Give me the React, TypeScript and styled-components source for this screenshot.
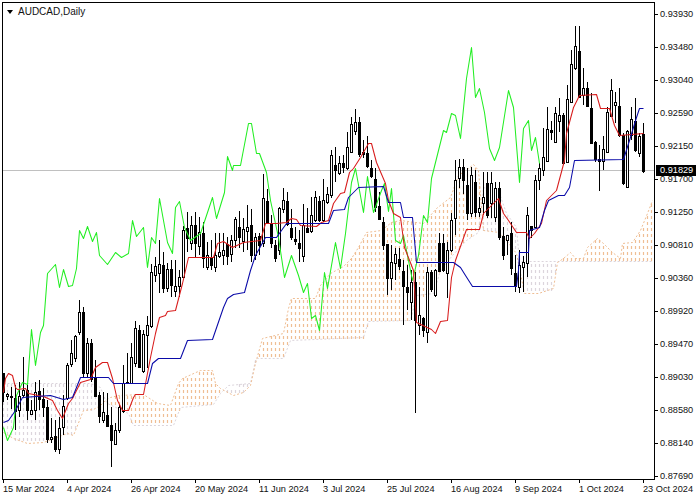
import React from 'react';
import styled, { createGlobalStyle } from 'styled-components';

type Candle = [number, number, number, number, number];
type Pt = [number, number];

// high, body top, body bottom, low, bullish (1 = hollow)
const candles: Candle[] = [
  [373,373,392,402,0],[393,394,396,400,1],[387,396,397,409,1],[385,398,411,430,0],[382,396,410,417,1],[357,390,395,397,1],
  [385,390,410,420,0],[400,410,414,415,1],[382,392,410,420,1],[380,391,399,410,0],[388,399,407,417,0],[400,407,439,443,0],
  [418,437,439,443,1],[420,436,449,452,0],[417,428,449,454,1],[395,406,427,435,1],[363,365,398,400,1],[340,353,364,367,1],
  [335,336,358,362,1],[300,312,332,335,1],[307,312,373,378,0],[338,343,373,377,1],[339,343,379,382,0],[360,377,396,396,0],
  [392,395,416,423,0],[392,412,420,423,1],[393,415,426,426,0],[407,425,440,467,0],[423,430,444,445,1],[404,407,430,433,1],
  [365,383,411,413,1],[353,382,383,384,1],[343,357,383,384,1],[321,328,363,367,1],[325,330,367,367,0],[330,334,371,373,1],
  [316,325,335,368,1],[264,272,326,328,1],[257,266,275,282,1],[240,264,273,293,1],[252,265,288,293,0],[263,269,288,292,1],
  [260,269,285,297,0],[260,286,291,297,1],[270,277,286,297,1],[226,230,277,278,1],[212,228,238,252,0],[216,225,243,250,1],
  [212,225,243,258,0],[217,232,246,255,1],[222,233,258,268,0],[242,255,267,270,1],[240,258,265,270,0],[233,255,267,272,1],
  [233,252,256,258,1],[233,250,255,265,1],[237,244,256,265,0],[235,240,254,262,1],[217,219,240,248,1],[211,227,237,248,0],
  [218,229,241,252,1],[205,227,231,250,1],[209,225,255,262,0],[233,237,255,260,1],[233,236,245,255,0],[174,198,243,247,1],
  [189,201,222,223,0],[215,223,243,248,0],[240,245,258,262,0],[207,208,250,255,1],[188,200,209,213,1],[192,201,224,226,0],
  [209,228,237,240,0],[227,239,241,245,0],[230,243,248,262,0],[204,225,256,262,1],[208,228,232,233,0],[197,215,231,233,1],
  [191,197,220,222,1],[196,201,220,222,0],[179,200,220,222,1],[187,194,202,204,1],[150,155,195,198,1],[147,165,170,182,0],
  [156,163,173,175,1],[155,163,167,173,0],[132,147,168,170,1],[117,124,152,153,1],[109,122,131,135,1],[117,122,154,157,0],
  [140,152,154,158,0],[136,153,166,168,0],[160,168,176,178,0],[168,179,207,212,0],[192,206,219,220,0],[217,222,245,250,0],
  [245,244,278,295,0],[245,262,278,290,1],[248,254,263,280,1],[248,259,266,270,0],[260,271,286,325,0],[265,287,292,310,0],
  [270,282,302,320,1],[272,282,320,413,0],[287,315,325,335,1],[317,318,330,337,0],[267,272,332,343,1],[270,272,289,292,0],
  [269,270,295,297,1],[233,243,271,272,0],[234,243,270,272,0],[242,250,273,298,1],[213,220,250,252,1],[160,180,218,235,1],
  [159,167,178,188,1],[159,167,180,194,0],[168,185,213,220,0],[167,175,213,217,1],[170,182,212,217,0],[197,208,212,217,1],
  [172,197,203,215,1],[172,183,215,218,0],[172,183,203,218,1],[182,188,217,222,1],[182,188,237,240,0],[227,236,255,260,0],
  [235,235,240,255,1],[222,233,268,275,0],[255,273,286,292,0],[250,265,287,293,1],[256,262,267,292,1],[207,215,263,277,1],
  [226,226,230,238,0],[175,180,227,228,1],[163,168,180,190,1],[128,157,170,176,1],[107,129,161,162,1],[121,130,132,140,0],
  [107,113,142,143,1],[98,115,121,132,1],[113,115,163,165,0],[85,99,162,163,1],[50,64,102,103,1],[26,46,68,70,1],
  [26,51,97,98,0],[68,88,95,105,1],[82,88,106,107,0],[93,108,143,144,0],[141,142,159,162,0],[145,159,161,191,0],
  [136,149,161,170,1],[107,112,152,153,1],[79,90,116,117,1],[92,102,105,123,1],[88,106,135,137,0],[133,135,183,185,0],
  [130,131,187,187,1],[107,119,135,140,1],[98,121,150,152,0],[133,136,153,157,1],[123,134,171,173,0],
];

const chikou: Pt[] = [
  [3,427],[7,440],[13,427],[16,395],[22,382],[27,384],[31,329],[35,365],[40,332],[43,325],[47,273],[55,264],[59,287],[63,269],[68,286],[72,285],[76,268],[79,230],[83,238],[87,226],[92,241],[96,232],[99,255],[107,264],[115,252],[121,257],[128,253],[132,220],[136,236],[143,227],[147,267],[151,237],[155,243],[159,198],[167,242],[172,253],[175,207],[179,201],[184,227],[190,240],[200,233],[212,197],[216,218],[224,192],[227,156],[232,170],
  [233,165],[240,165],[248,123],[251,123],[256,153],[259,153],[266,172],[270,200],[278,237],[281,257],[284,277],[291,255],[298,275],[303,292],[307,283],[311,318],[315,315],[319,330],[324,272],[327,288],[335,242],[340,268],[345,233],[351,182],[355,168],[363,212],[367,176],[373,212],[381,190],[384,183],[388,211],[391,188],[395,240],[400,243],[403,235],[406,250],[412,280],[418,255],[423,215],[427,222],[431,178],[443,130],[446,132],[451,113],[455,115],[460,138],[466,78],[471,47],[475,97],[479,88],[484,112],[489,148],[494,160],[499,147],[508,90],[513,107],[519,182],[523,128],[528,120],[531,150],[535,137],[539,163],
];

const tenkan: Pt[] = [
  [3,392],[5,378],[8,373],[12,375],[15,387],[17,389],[25,388],[28,393],[43,396],[52,400],[57,410],[62,418],[68,403],[72,398],[80,382],[90,379],[95,367],[102,362],[107,362],[112,378],[117,400],[122,410],[128,410],[133,397],[135,394],[143,394],[150,357],[155,333],[159,317],[165,315],[167,311],[175,310],[182,283],[188,257],[213,257],[217,243],[223,241],[232,247],[243,242],[260,240],[265,223],[276,223],[286,222],[291,218],[296,219],[300,225],[316,226],[321,222],[328,220],[333,203],[340,193],[344,192],[349,172],[353,168],[360,157],[368,143],[371,143],[376,162],[385,183],[388,200],[393,213],[400,217],[404,247],[413,270],[416,322],[431,329],[435,333],[440,321],[447,320],[451,277],[455,260],[466,229],[479,229],[483,213],[498,198],[503,213],[508,220],[516,232],[526,232],[529,238],[534,233],[541,223],[546,200],[556,190],[564,160],[566,133],[573,107],[579,95],[596,94],[600,108],[609,108],[614,125],[619,135],[643,133],
];

const kijun: Pt[] = [
  [3,422],[8,420],[15,410],[22,397],[50,395],[63,399],[72,397],[80,377],[108,377],[113,383],[147,383],[152,363],[158,358],[180,358],[187,340],[212,339],[223,307],[227,298],[233,294],[244,292],[250,270],[255,255],[265,237],[276,237],[281,230],[286,223],[328,223],[333,210],[344,209],[348,197],[358,187],[383,186],[388,202],[400,202],[403,217],[412,217],[416,262],[453,262],[460,267],[465,275],[472,286],[516,286],[518,270],[519,252],[528,252],[529,230],[539,227],[544,210],[548,200],[558,195],[564,195],[569,187],[574,160],[623,159],[629,140],[636,117],[639,108],[643,108],
];

const senkouA: Pt[] = [
  [3,432],[13,438],[27,443],[43,442],[67,433],[73,435],[83,410],[93,409],[100,405],[105,400],[110,397],[118,395],[143,394],[157,403],[170,405],[178,383],[182,378],[200,370],[212,370],[215,383],[220,388],[233,395],[243,392],[250,385],[255,363],[262,338],[283,333],[288,308],[291,298],[315,298],[320,285],[330,273],[343,266],[351,258],[358,247],[366,232],[381,230],[391,222],[400,220],[423,223],[436,208],[450,197],[458,175],[468,168],[473,164],[478,170],[483,230],[499,232],[506,240],[516,253],[524,293],[538,293],[553,288],[557,262],[563,258],[570,252],[575,258],[583,258],[587,247],[597,238],[603,243],[612,252],[620,258],[622,243],[632,242],[640,230],[647,213],[652,200],
];

const senkouB: Pt[] = [
  [3,383],[90,383],[100,387],[105,400],[107,403],[128,413],[133,425],[173,425],[180,407],[213,404],[220,393],[228,385],[250,383],[255,360],[257,358],[283,358],[290,340],[363,337],[368,321],[410,320],[416,295],[433,293],[440,270],[452,255],[466,240],[478,232],[483,187],[499,193],[506,213],[516,227],[519,261],[652,261],
];

const prices = ['0.93930','0.93480','0.93040','0.92590','0.92150','0.91700','0.91250','0.90810','0.90360','0.89920','0.89470','0.89030','0.88580','0.88140','0.87690'];
const dates = ['15 Mar 2024','4 Apr 2024','26 Apr 2024','20 May 2024','11 Jun 2024','3 Jul 2024','25 Jul 2024','16 Aug 2024','9 Sep 2024','1 Oct 2024','23 Oct 2024'];

const at = (line: Pt[], x: number): number => {
  for (let i = 1; i < line.length; i++) {
    if (x <= line[i][0]) {
      const [x0, y0] = line[i - 1];
      const [x1, y1] = line[i];
      return y0 + ((y1 - y0) * (x - x0)) / (x1 - x0 || 1);
    }
  }
  return line[line.length - 1][1];
};

const SAND = '#efbe94';
const THISTLE = '#dcd5dc';

const cloudPath = (sandy: boolean): string => {
  let d = '';
  for (let x = 3; x <= 651; x += 4) {
    const a = at(senkouA, x);
    const b = at(senkouB, x);
    if ((a < b) !== sandy) continue;
    const top = Math.min(a, b);
    const bottom = Math.max(a, b);
    for (let y = Math.ceil(top / 6) * 6; y < bottom; y += 6) {
      d += `M${x + 0.5} ${y}v3`;
    }
  }
  return d;
};

const toPoints = (line: Pt[]) => line.map(([x, y]) => `${x + 0.5},${y + 0.5}`).join(' ');

const GlobalStyle = createGlobalStyle`
  html, body { margin: 0; padding: 0; background: #fff; }
`;

const Window = styled.div`
  width: 700px;
  height: 500px;
  box-sizing: border-box;
  padding: 2px 0 0 2px;
  display: grid;
  grid-template-columns: 653px 45px;
  grid-template-rows: 478px 20px;
  background: #fff;
  overflow: hidden;
  font-family: "Liberation Sans", Arial, sans-serif;
  font-size: 9.2px;
  line-height: 10px;
  color: #111;
`;

const PlotFrame = styled.div`
  position: relative;
  border: 1px solid #000;
  background: #fff;
`;

const ChartSvg = styled.svg`
  display: block;
  width: 651px;
  height: 476px;
`;

const Title = styled.div`
  position: absolute;
  left: 4px;
  top: 3px;
  display: flex;
  align-items: center;
  gap: 5px;
  font-size: 10px;
  line-height: 12px;
`;

const TitleMarker = styled.span`
  width: 0;
  height: 0;
  border-left: 3.5px solid transparent;
  border-right: 3.5px solid transparent;
  border-top: 4px solid #000;
`;

const PriceAxis = styled.div`
  position: relative;
  display: flex;
  flex-direction: column;
  padding: 7px 0 0 5px;
`;

const PriceLabel = styled.div`
  position: relative;
  flex: none;
  height: 33px;
  &::before {
    content: '';
    position: absolute;
    left: -5px;
    top: 5px;
    width: 3px;
    height: 1px;
    background: #000;
  }
`;

const PriceTag = styled.div`
  position: absolute;
  left: 1px;
  top: 163px;
  width: 40px;
  height: 11px;
  box-sizing: border-box;
  padding-left: 4px;
  background: #000;
  color: #fff;
  line-height: 11px;
`;

const TimeAxis = styled.div`
  grid-column: 1 / span 2;
  display: flex;
  padding-left: 1px;
`;

const TimeLabel = styled.div`
  position: relative;
  flex: none;
  width: 64px;
  padding-top: 4px;
  white-space: nowrap;
  &:last-child {
    width: auto;
  }
  &::before {
    content: '';
    position: absolute;
    left: 0;
    top: 0;
    width: 1px;
    height: 3px;
    background: #000;
  }
`;

const Wick = styled.line`
  stroke: #000;
  stroke-width: 1;
`;

const Body = styled.rect<{ $hollow: boolean }>`
  stroke: #000;
  stroke-width: 1;
  fill: ${(p) => (p.$hollow ? '#fff' : '#000')};
`;

const IndicatorLine = styled.polyline<{ $color: string }>`
  fill: none;
  stroke: ${(p) => p.$color};
  stroke-width: 1.05;
  stroke-linejoin: round;
`;

const CloudEdge = styled.polyline<{ $color: string }>`
  fill: none;
  stroke: ${(p) => p.$color};
  stroke-width: 1;
  stroke-dasharray: 2 2;
`;

const CloudHatch = styled.path<{ $color: string }>`
  fill: none;
  stroke: ${(p) => p.$color};
  stroke-width: 1.2;
`;

const BidLine = styled.line`
  stroke: #c0c0c0;
  stroke-width: 1;
`;

export default function App() {
  return (
    <>
      <GlobalStyle />
      <Window>
        <PlotFrame>
          <ChartSvg viewBox="3 3 651 476">
            <BidLine x1={3} x2={654} y1={170.5} y2={170.5} />
            <CloudHatch $color={THISTLE} d={cloudPath(false)} />
            <CloudHatch $color={SAND} d={cloudPath(true)} />
            <CloudEdge $color={THISTLE} points={toPoints(senkouB)} />
            <CloudEdge $color={SAND} points={toPoints(senkouA)} />
            {candles.map(([high, top, bottom, low, up], i) => {
              const cx = 3 + 4 * i + 0.5;
              return (
                <g key={i}>
                  <Wick x1={cx} x2={cx} y1={high} y2={low} />
                  <Body $hollow={up === 1} x={cx - 1} y={top + 0.5} width={2} height={Math.max(bottom - top, 1)} />
                </g>
              );
            })}
            <IndicatorLine $color="#22ee22" points={toPoints(chikou)} />
            <IndicatorLine $color="#d81c1c" points={toPoints(tenkan)} />
            <IndicatorLine $color="#0a0aa8" points={toPoints(kijun)} />
          </ChartSvg>
          <Title>
            <TitleMarker />
            AUDCAD,Daily
          </Title>
        </PlotFrame>
        <PriceAxis>
          {prices.map((p) => (
            <PriceLabel key={p}>{p}</PriceLabel>
          ))}
          <PriceTag>0.91829</PriceTag>
        </PriceAxis>
        <TimeAxis>
          {dates.map((d) => (
            <TimeLabel key={d}>{d}</TimeLabel>
          ))}
        </TimeAxis>
      </Window>
    </>
  );
}
